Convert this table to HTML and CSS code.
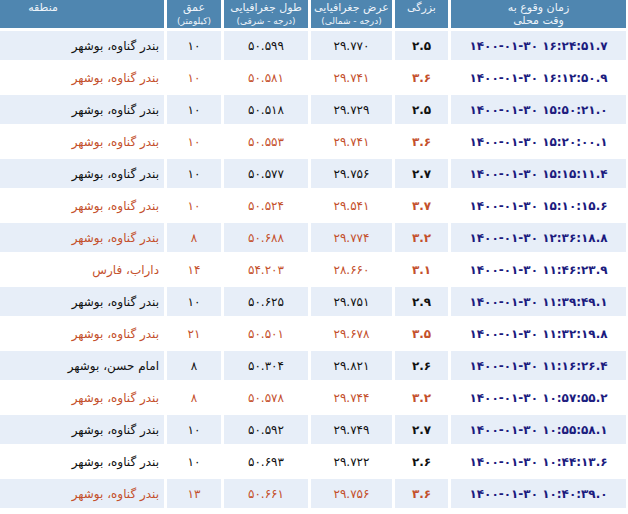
FILE: index.html
```html
<!DOCTYPE html>
<html lang="fa" dir="rtl">
<head>
<meta charset="utf-8">
<title>زمین‌لرزه‌ها</title>
<link rel="stylesheet" href="styles.css">
</head>
<body>
<div class="wrap">
<table class="quakes">
<colgroup>
<col class="c-time"><col class="c-mag"><col class="c-lat"><col class="c-lon"><col class="c-dep"><col class="c-reg">
</colgroup>
<thead>
<tr>
<th>زمان وقوع به<br>وقت محلی</th>
<th>بزرگی</th>
<th>عرض جغرافیایی<br><span class="sub">(درجه - شمالی)</span></th>
<th>طول جغرافیایی<br><span class="sub">(درجه - شرقی)</span></th>
<th>عمق<br><span class="sub">(کیلومتر)</span></th>
<th>منطقه</th>
</tr>
</thead>
<tbody>
<tr class="alt"><td class="time">۱۴۰۰-۰۱-۳۰ ۱۶:۲۴:۵۱.۷</td><td class="mag">۲.۵</td><td>۲۹.۷۷۰</td><td>۵۰.۵۹۹</td><td>۱۰</td><td class="reg">بندر گناوه، بوشهر</td></tr>
<tr class="hot"><td class="time">۱۴۰۰-۰۱-۳۰ ۱۶:۱۲:۵۰.۹</td><td class="mag">۳.۶</td><td>۲۹.۷۴۱</td><td>۵۰.۵۸۱</td><td>۱۰</td><td class="reg">بندر گناوه، بوشهر</td></tr>
<tr class="alt"><td class="time">۱۴۰۰-۰۱-۳۰ ۱۵:۵۰:۲۱.۰</td><td class="mag">۲.۵</td><td>۲۹.۷۲۹</td><td>۵۰.۵۱۸</td><td>۱۰</td><td class="reg">بندر گناوه، بوشهر</td></tr>
<tr class="hot"><td class="time">۱۴۰۰-۰۱-۳۰ ۱۵:۲۰:۰۰.۱</td><td class="mag">۳.۶</td><td>۲۹.۷۴۱</td><td>۵۰.۵۵۳</td><td>۱۰</td><td class="reg">بندر گناوه، بوشهر</td></tr>
<tr class="alt"><td class="time">۱۴۰۰-۰۱-۳۰ ۱۵:۱۵:۱۱.۴</td><td class="mag">۲.۷</td><td>۲۹.۷۵۶</td><td>۵۰.۵۷۷</td><td>۱۰</td><td class="reg">بندر گناوه، بوشهر</td></tr>
<tr class="hot"><td class="time">۱۴۰۰-۰۱-۳۰ ۱۵:۱۰:۱۵.۶</td><td class="mag">۳.۷</td><td>۲۹.۵۴۱</td><td>۵۰.۵۲۴</td><td>۱۰</td><td class="reg">بندر گناوه، بوشهر</td></tr>
<tr class="alt hot"><td class="time">۱۴۰۰-۰۱-۳۰ ۱۲:۳۶:۱۸.۸</td><td class="mag">۳.۲</td><td>۲۹.۷۷۴</td><td>۵۰.۶۸۸</td><td>۸</td><td class="reg">بندر گناوه، بوشهر</td></tr>
<tr class="hot"><td class="time">۱۴۰۰-۰۱-۳۰ ۱۱:۴۶:۲۳.۹</td><td class="mag">۳.۱</td><td>۲۸.۶۶۰</td><td>۵۴.۲۰۳</td><td>۱۴</td><td class="reg">داراب، فارس</td></tr>
<tr class="alt"><td class="time">۱۴۰۰-۰۱-۳۰ ۱۱:۳۹:۴۹.۱</td><td class="mag">۲.۹</td><td>۲۹.۷۵۱</td><td>۵۰.۶۲۵</td><td>۱۰</td><td class="reg">بندر گناوه، بوشهر</td></tr>
<tr class="hot"><td class="time">۱۴۰۰-۰۱-۳۰ ۱۱:۳۲:۱۹.۸</td><td class="mag">۳.۵</td><td>۲۹.۶۷۸</td><td>۵۰.۵۰۱</td><td>۲۱</td><td class="reg">بندر گناوه، بوشهر</td></tr>
<tr class="alt"><td class="time">۱۴۰۰-۰۱-۳۰ ۱۱:۱۶:۲۶.۴</td><td class="mag">۲.۶</td><td>۲۹.۸۲۱</td><td>۵۰.۳۰۴</td><td>۸</td><td class="reg">امام حسن، بوشهر</td></tr>
<tr class="hot"><td class="time">۱۴۰۰-۰۱-۳۰ ۱۰:۵۷:۵۵.۲</td><td class="mag">۳.۲</td><td>۲۹.۷۴۴</td><td>۵۰.۵۷۸</td><td>۸</td><td class="reg">بندر گناوه، بوشهر</td></tr>
<tr class="alt"><td class="time">۱۴۰۰-۰۱-۳۰ ۱۰:۵۵:۵۸.۱</td><td class="mag">۲.۷</td><td>۲۹.۷۴۹</td><td>۵۰.۵۹۲</td><td>۱۰</td><td class="reg">بندر گناوه، بوشهر</td></tr>
<tr><td class="time">۱۴۰۰-۰۱-۳۰ ۱۰:۴۴:۱۳.۶</td><td class="mag">۲.۶</td><td>۲۹.۷۲۲</td><td>۵۰.۶۹۳</td><td>۱۰</td><td class="reg">بندر گناوه، بوشهر</td></tr>
<tr class="alt hot"><td class="time">۱۴۰۰-۰۱-۳۰ ۱۰:۴۰:۳۹.۰</td><td class="mag">۳.۶</td><td>۲۹.۷۵۶</td><td>۵۰.۶۶۱</td><td>۱۳</td><td class="reg">بندر گناوه، بوشهر</td></tr>
</tbody>
</table>
</div>
</body>
</html>
```
FILE: styles.css
```css
html, body {
  margin: 0;
  padding: 0;
  background: #ffffff;
}
body {
  font-family: "DejaVu Sans", "Noto Sans", sans-serif;
  font-size: 12px;
  color: #111111;
}
.wrap {
  width: 628px;
  height: 514px;
  overflow: hidden;
}
.quakes {
  table-layout: fixed;
  width: 710px;
  border-collapse: separate;
  border-spacing: 3px;
  margin-top: -3px;
  margin-right: -1px;
}
.c-time { width: 175px; }
.c-mag { width: 53px; }
.c-lat { width: 81px; }
.c-lon { width: 84px; }
.c-dep { width: 54px; }
.c-reg { width: 242px; }

.quakes th {
  background: #4f86b0;
  color: #eef4fa;
  font-weight: normal;
  font-size: 11px;
  line-height: 13px;
  height: 28px;
  padding: 1px 0 0;
  vertical-align: top;
  text-align: center;
  box-sizing: border-box;
  white-space: nowrap;
  overflow: hidden;
}
.quakes th .sub {
  font-size: 9px;
  line-height: 12px;
}
.quakes td {
  height: 29px;
  padding: 0 4px;
  text-align: center;
  vertical-align: middle;
  box-sizing: border-box;
  white-space: nowrap;
}
.quakes tr.alt td {
  background: #e7eef8;
}
.quakes tr.hot td {
  color: #c4502c;
}
.quakes td.time {
  color: #1b1b7e;
  font-weight: bold;
  direction: ltr;
}
.quakes tr.hot td.time {
  color: #1b1b7e;
}
.quakes td.mag {
  font-weight: bold;
}
.quakes td.reg {
  text-align: right;
  padding-right: 5px;
}
```
